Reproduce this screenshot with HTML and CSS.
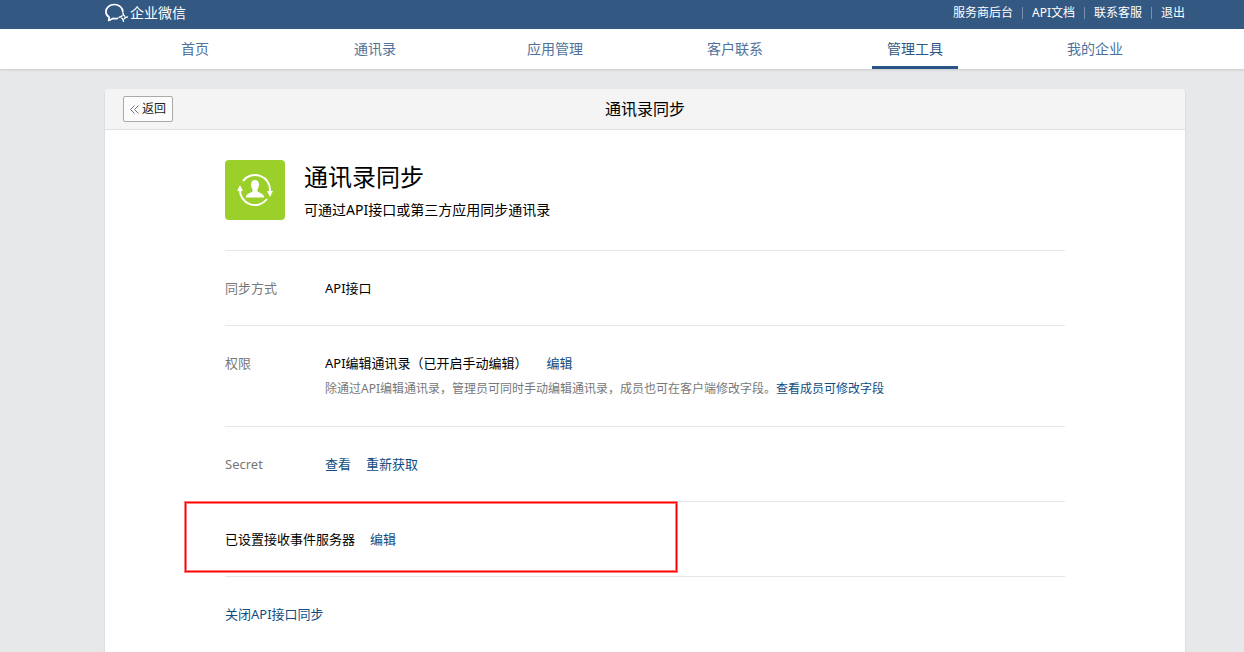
FILE: index.html
```html
<!DOCTYPE html>
<html lang="zh-CN">
<head>
<meta charset="utf-8">
<title>企业微信</title>
<link rel="stylesheet" href="styles.css">
</head>
<body>
<header class="topbar">
  <a class="brand" href="#">
    <svg class="brand-icon" viewBox="0 0 24 20" width="24" height="20" aria-hidden="true">
      <path d="M12.500 15.400c-1.500.4-3 .4-4.500 0L3.700 17.500l.5-3.200C2.100 12.900.9 10.900.9 8.700.9 4.700 4.600 1.500 9.300 1.500s8.500 3.200 8.500 7.200" fill="none" stroke="#fff" stroke-width="1.700" stroke-linejoin="round" stroke-linecap="round"/>
      <g fill="none" stroke="#fff" stroke-width="1.500" stroke-linecap="round"><path d="M18 10.200c.1 1.500.6 2.200 1.500 2.800M22.300 14c-1.500.1-2.200.6-2.800 1.500M18.500 18.200c-.1-1.500-.6-2.200-1.500-2.800M14.200 14.300c1.500-.1 2.200-.6 2.800-1.500"/></g>
    </svg>
    <span>企业微信</span>
  </a>
  <div class="account">
    <a href="#">服务商后台</a>
    <a href="#">API文档</a>
    <a href="#">联系客服</a>
    <a href="#">退出</a>
  </div>
</header>
<nav class="nav">
  <a href="#"><span>首页</span></a>
  <a href="#"><span>通讯录</span></a>
  <a href="#"><span>应用管理</span></a>
  <a href="#"><span>客户联系</span></a>
  <a class="active" href="#"><span>管理工具</span></a>
  <a href="#"><span>我的企业</span></a>
</nav>
<main class="page">
  <section class="panel">
    <div class="panel-head">
      <button class="back" type="button">
        <svg viewBox="0 0 9 9" width="9" height="9" aria-hidden="true"><path d="M4.500.500l-4 4 4 4M8.500.500l-4 4 4 4" fill="none" stroke="#777"/></svg>
        返回
      </button>
      <h1>通讯录同步</h1>
    </div>
    <div class="content">
      <div class="intro">
        <svg class="app-icon" viewBox="0 0 60 60" width="60" height="60" aria-hidden="true">
          <rect width="60" height="60" rx="4" fill="#9bcf2a"/>
          <g fill="none" stroke="#fff" stroke-width="2"><path d="M18 21A15 15 0 0 1 45 31"/><path d="M42 39A15 15 0 0 1 15 29"/></g>
          <path d="M12 31l3-6 3 6zM42 31h6l-3 6z" fill="#fff"/>
          <path d="M30 20c-2.700 0-4 1.900-4 4.500 0 2.200.7 3.700 1.600 4.800v2c-.7 1.300-6.600 2-6.800 6.200h18.400c-.2-4.200-6.100-4.900-6.800-6.200v-2c.9-1.100 1.600-2.600 1.600-4.800 0-2.600-1.300-4.500-4-4.500z" fill="#fff"/>
        </svg>
        <div>
          <h2>通讯录同步</h2>
          <p>可通过API接口或第三方应用同步通讯录</p>
        </div>
      </div>
      <div class="row">
        <div class="label">同步方式</div>
        <div class="value">API接口</div>
      </div>
      <div class="row">
        <div class="label">权限</div>
        <div class="value">
          <div class="permission"><span>API编辑通讯录（已开启手动编辑）</span><a href="#">编辑</a></div>
          <p class="hint">除通过API编辑通讯录，管理员可同时手动编辑通讯录，成员也可在客户端修改字段。<a href="#">查看成员可修改字段</a></p>
        </div>
      </div>
      <div class="row">
        <div class="label">Secret</div>
        <div class="value actions"><a href="#">查看</a><a href="#">重新获取</a></div>
      </div>
      <div class="row highlighted">
        <div class="actions"><span>已设置接收事件服务器</span><a href="#">编辑</a></div>
      </div>
      <div class="row"><a href="#">关闭API接口同步</a></div>
    </div>
  </section>
</main>
</body>
</html>
```
FILE: styles.css
```css
*,
*::after {
  box-sizing: border-box;
}

body {
  margin: 0;
  min-height: 100vh;
  display: flex;
  flex-direction: column;
  background: #e7e8ea;
  color: #000;
  font: 13px/20px "Noto Sans", "Noto Sans CJK SC", sans-serif;
}

a {
  color: #0f4c81;
  text-decoration: none;
}

h1,
h2,
p {
  margin: 0;
  font-weight: 400;
}

.topbar,
.nav,
.page {
  padding-left: 105px;
  padding-right: 59px;
}

.topbar {
  height: 29px;
  display: flex;
  justify-content: space-between;
  background: #335983;
}

.topbar a {
  color: #fff;
}

.brand {
  display: flex;
  align-items: flex-start;
  gap: 1px;
  padding-top: 3px;
  font-size: 14px;
}

.brand-icon {
  display: block;
}

.account {
  display: flex;
  align-items: flex-start;
  padding-top: 3px;
  font-size: 12px;
}

.account a + a {
  margin-left: 9px;
  padding-left: 10px;
  background: linear-gradient(#7890ad, #7890ad) left center / 1px 12px no-repeat;
}

.nav {
  position: relative;
  height: 40px;
  display: flex;
  background: #fff;
  box-shadow: 0 1px 2px rgba(0, 0, 0, .14);
}

.nav a {
  flex: 1;
  display: flex;
  justify-content: center;
  color: #4e729b;
  font-size: 14px;
  line-height: 40px;
}

.nav span {
  padding: 0 15px;
}

.nav .active {
  color: #2e5684;
}

.nav .active span {
  border-bottom: 3px solid #2b5486;
}

.page {
  flex: 1;
  display: flex;
  padding-top: 20px;
}

.panel {
  flex: 1;
  background: #fff;
  border-radius: 4px 4px 0 0;
  box-shadow: 0 1px 2px rgba(0, 0, 0, .14);
}

.panel-head {
  height: 41px;
  display: grid;
  grid-template-columns: 1fr auto 1fr;
  align-items: center;
  padding: 0 18px;
  background: #f4f4f4;
  border-bottom: 1px solid #dfe0e2;
  border-radius: 4px 4px 0 0;
}

.panel-head h1 {
  font-size: 16px;
  line-height: 24px;
}

.back {
  justify-self: start;
  display: flex;
  align-items: center;
  gap: 3px;
  height: 26px;
  padding: 0 6px;
  border: 1px solid #aaa;
  border-radius: 2px;
  background: #fcfcfc;
  color: #222;
  font: inherit;
  font-size: 12px;
}

.content {
  padding: 30px 120px 0;
}

.intro {
  display: flex;
  gap: 19px;
  padding-bottom: 30px;
}

.intro h2 {
  font-size: 24px;
  line-height: 34px;
}

.intro p {
  margin-top: 6px;
  font-size: 14px;
}

.row {
  position: relative;
  display: flex;
  padding: 27px 0;
  border-top: 1px solid #e4e6e9;
}

.label {
  width: 100px;
  color: #787878;
}

.permission {
  display: flex;
  gap: 19px;
}

.hint {
  margin-top: 6px;
  color: #787878;
  font-size: 12px;
}

.actions {
  display: flex;
  gap: 15px;
}

.highlighted::after {
  content: "";
  position: absolute;
  top: 0;
  left: -40px;
  width: 492px;
  height: 70px;
  border: 1px solid #f00;
  box-shadow: 0 0 0 1px #ff7f7f, inset 0 0 0 1px #ff7f7f;
  pointer-events: none;
}
```
